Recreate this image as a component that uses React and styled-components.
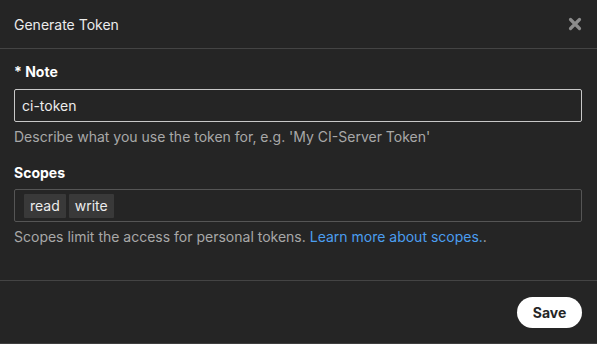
import React from 'react'
import styled, {createGlobalStyle} from 'styled-components'

const Global = createGlobalStyle`
    html, body {
        margin: 0;
        background: #252525;
        font-family: Inter, "Noto Sans", sans-serif;
        color: #ececec;
    }
`

const Modal = styled.div`
    width: 597px;
    height: 343px;
    background: #252525;
    border-bottom: 1px solid #3e3e3e;
    display: flex;
    flex-direction: column;
`
const Header = styled.div`
    height: 48px;
    display: flex;
    align-items: center;
    justify-content: space-between;
    padding: 0 15px 0 14px;
    border-bottom: 1px solid #444;
`
const Title = styled.div`
    font-size: 14px;
    color: #ececec;
`
const Close = styled.button`
    background: none;
    border: 0;
    padding: 0;
    width: 14px;
    height: 14px;
    display: flex;
    cursor: pointer;
`
const Body = styled.div`
    flex: 1;
    padding: 13px 15px 0 14px;
    border-bottom: 1px solid #444;
`
const Field = styled.div`
    display: flex;
    flex-direction: column;
    margin-bottom: ${p => p.gap || 0}px;
`
const Label = styled.label`
    font-size: 14px;
    font-weight: 700;
    line-height: 20px;
    color: #fff;
    margin-bottom: ${p => p.gap || 7}px;
`
const TextInput = styled.input`
    box-sizing: border-box;
    height: 33px;
    border: 1px solid #c8c8c8;
    border-radius: 2px;
    background: transparent;
    color: #ececec;
    font: inherit;
    font-size: 14px;
    padding: 0 7px;
    outline: none;
`
const TagBox = styled.div`
    box-sizing: border-box;
    height: 33px;
    border: 1px solid #555;
    border-radius: 2px;
    display: flex;
    align-items: center;
    gap: 3px;
    padding: 0 9px;
`
const Tag = styled.span`
    background: #393939;
    color: #ececec;
    font-size: 14px;
    line-height: 24px;
    padding: 0 6px;
    border-radius: 1px;
`
const Help = styled.div`
    font-size: 14px;
    line-height: 20px;
    color: #a8a8a8;
    margin-top: 5px;
`
const Link = styled.a`
    color: #4b9ef0;
    text-decoration: none;
`
const Footer = styled.div`
    height: 62px;
    display: flex;
    align-items: center;
    justify-content: flex-end;
    padding-right: 15px;
`
const SaveButton = styled.button`
    width: 65px;
    height: 31px;
    border: 0;
    border-radius: 16px;
    background: #fff;
    color: #252525;
    font: inherit;
    font-size: 14px;
    font-weight: 700;
    cursor: pointer;
`

function App() {
    return (
        <>
            <Global/>
            <Modal>
                <Header>
                    <Title>Generate Token</Title>
                    <Close aria-label="Close">
                        <svg width="14" height="14" viewBox="0 0 14 14">
                            <path d="M2.5 2.5 L11.5 11.5 M11.5 2.5 L2.5 11.5" stroke="#8c8c8c" strokeWidth="3.2" strokeLinecap="round"/>
                        </svg>
                    </Close>
                </Header>
                <Body>
                    <Field gap={16}>
                        <Label>* Note</Label>
                        <TextInput defaultValue="ci-token"/>
                        <Help>Describe what you use the token for, e.g. 'My CI-Server Token'</Help>
                    </Field>
                    <Field>
                        <Label gap={6}>Scopes</Label>
                        <TagBox>
                            <Tag>read</Tag>
                            <Tag>write</Tag>
                        </TagBox>
                        <Help>Scopes limit the access for personal tokens. <Link href="#">Learn more about scopes.</Link>.</Help>
                    </Field>
                </Body>
                <Footer>
                    <SaveButton>Save</SaveButton>
                </Footer>
            </Modal>
        </>
    )
}

export default App
